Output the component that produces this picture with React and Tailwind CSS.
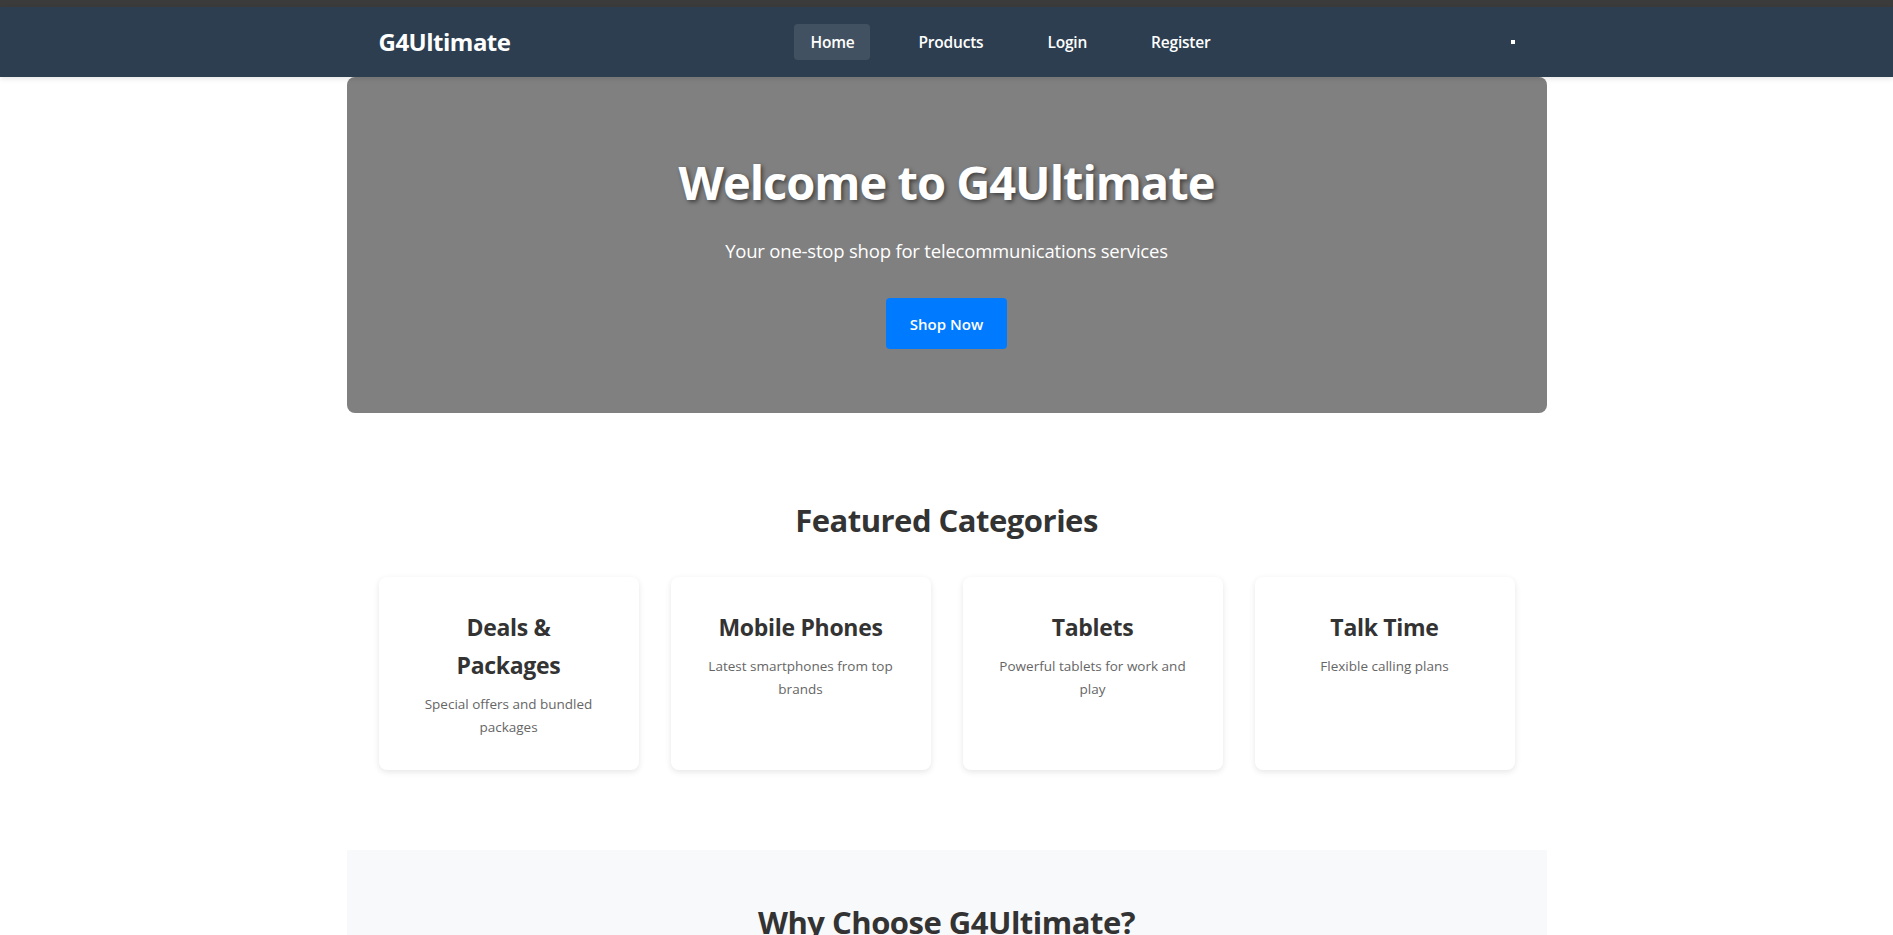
const categories = [
  { title: 'Deals & Packages', text: 'Special offers and bundled packages' },
  { title: 'Mobile Phones', text: 'Latest smartphones from top brands' },
  { title: 'Tablets', text: 'Powerful tablets for work and play' },
  { title: 'Talk Time', text: 'Flexible calling plans' },
]

const links = ['Home', 'Products', 'Login', 'Register']

function Navbar() {
  return (
    <nav className="bg-[#2c3e50] shadow-[0_2px_5px_rgba(0,0,0,0.1)] relative z-10">
      <div className="max-w-[1200px] mx-auto h-[70px] px-8 flex items-center justify-between">
        <a className="text-white text-[24px] font-bold tracking-[-0.5px]">G4Ultimate</a>
        <ul className="flex items-center gap-8">
          {links.map((l, i) => (
            <li key={l}>
              <a
                className={`block px-4 h-9 leading-9 rounded text-white text-[15.5px] font-semibold tracking-[-0.2px] ${
                  i === 0 ? 'bg-white/10' : ''
                }`}
              >
                {l}
              </a>
            </li>
          ))}
        </ul>
        <span className="w-1 h-1 bg-white" />
      </div>
    </nav>
  )
}

export default function App() {
  return (
    <div className="min-h-screen bg-white text-[#333] font-['Open_Sans','Noto_Sans',sans-serif] leading-[1.6]">
      <div className="h-[7px] bg-[#3b3b3b]" />
      <Navbar />

      <main className="max-w-[1200px] mx-auto">
        {/* Hero */}
        <section className="bg-[#808080] rounded-lg text-center text-white pt-[70px] pb-[64px] px-8">
          <h1 className="text-[47px] font-bold leading-[1.5] tracking-[-1px] [text-shadow:2px_2px_4px_rgba(0,0,0,0.5)]">
            Welcome to G4Ultimate
          </h1>
          <p className="text-[18.5px] leading-[1.6] mt-[18px] mb-[33px] tracking-[-0.2px]">
            Your one-stop shop for telecommunications services
          </p>
          <button className="bg-[#007bff] text-white text-[15px] font-semibold px-6 h-[51px] rounded">
            Shop Now
          </button>
        </section>

        {/* Featured Categories */}
        <section className="mt-8 pt-[51px] pb-12 px-8">
          <h2 className="text-center text-[31px] font-bold leading-[1.6] mb-[31px] tracking-[-0.5px]">
            Featured Categories
          </h2>
          <div className="grid grid-cols-4 gap-8">
            {categories.map((c) => (
              <div
                key={c.title}
                className="bg-white rounded-lg shadow-[0_2px_6px_rgba(0,0,0,0.1)] py-8 px-9 text-center"
              >
                <h3 className="text-[23px] font-bold leading-[1.65] mb-2 tracking-[-0.3px]">{c.title}</h3>
                <p className="text-[13.5px] text-[#666] leading-[1.7]">{c.text}</p>
              </div>
            ))}
          </div>
        </section>

        {/* Why Choose */}
        <section className="mt-8 bg-[#f8f9fa] pt-12 pb-12 px-8">
          <h2 className="text-center text-[31px] font-bold leading-[1.6] tracking-[-0.5px]">
            Why Choose G4Ultimate?
          </h2>
          <div className="h-40" />
        </section>
      </main>
    </div>
  )
}
